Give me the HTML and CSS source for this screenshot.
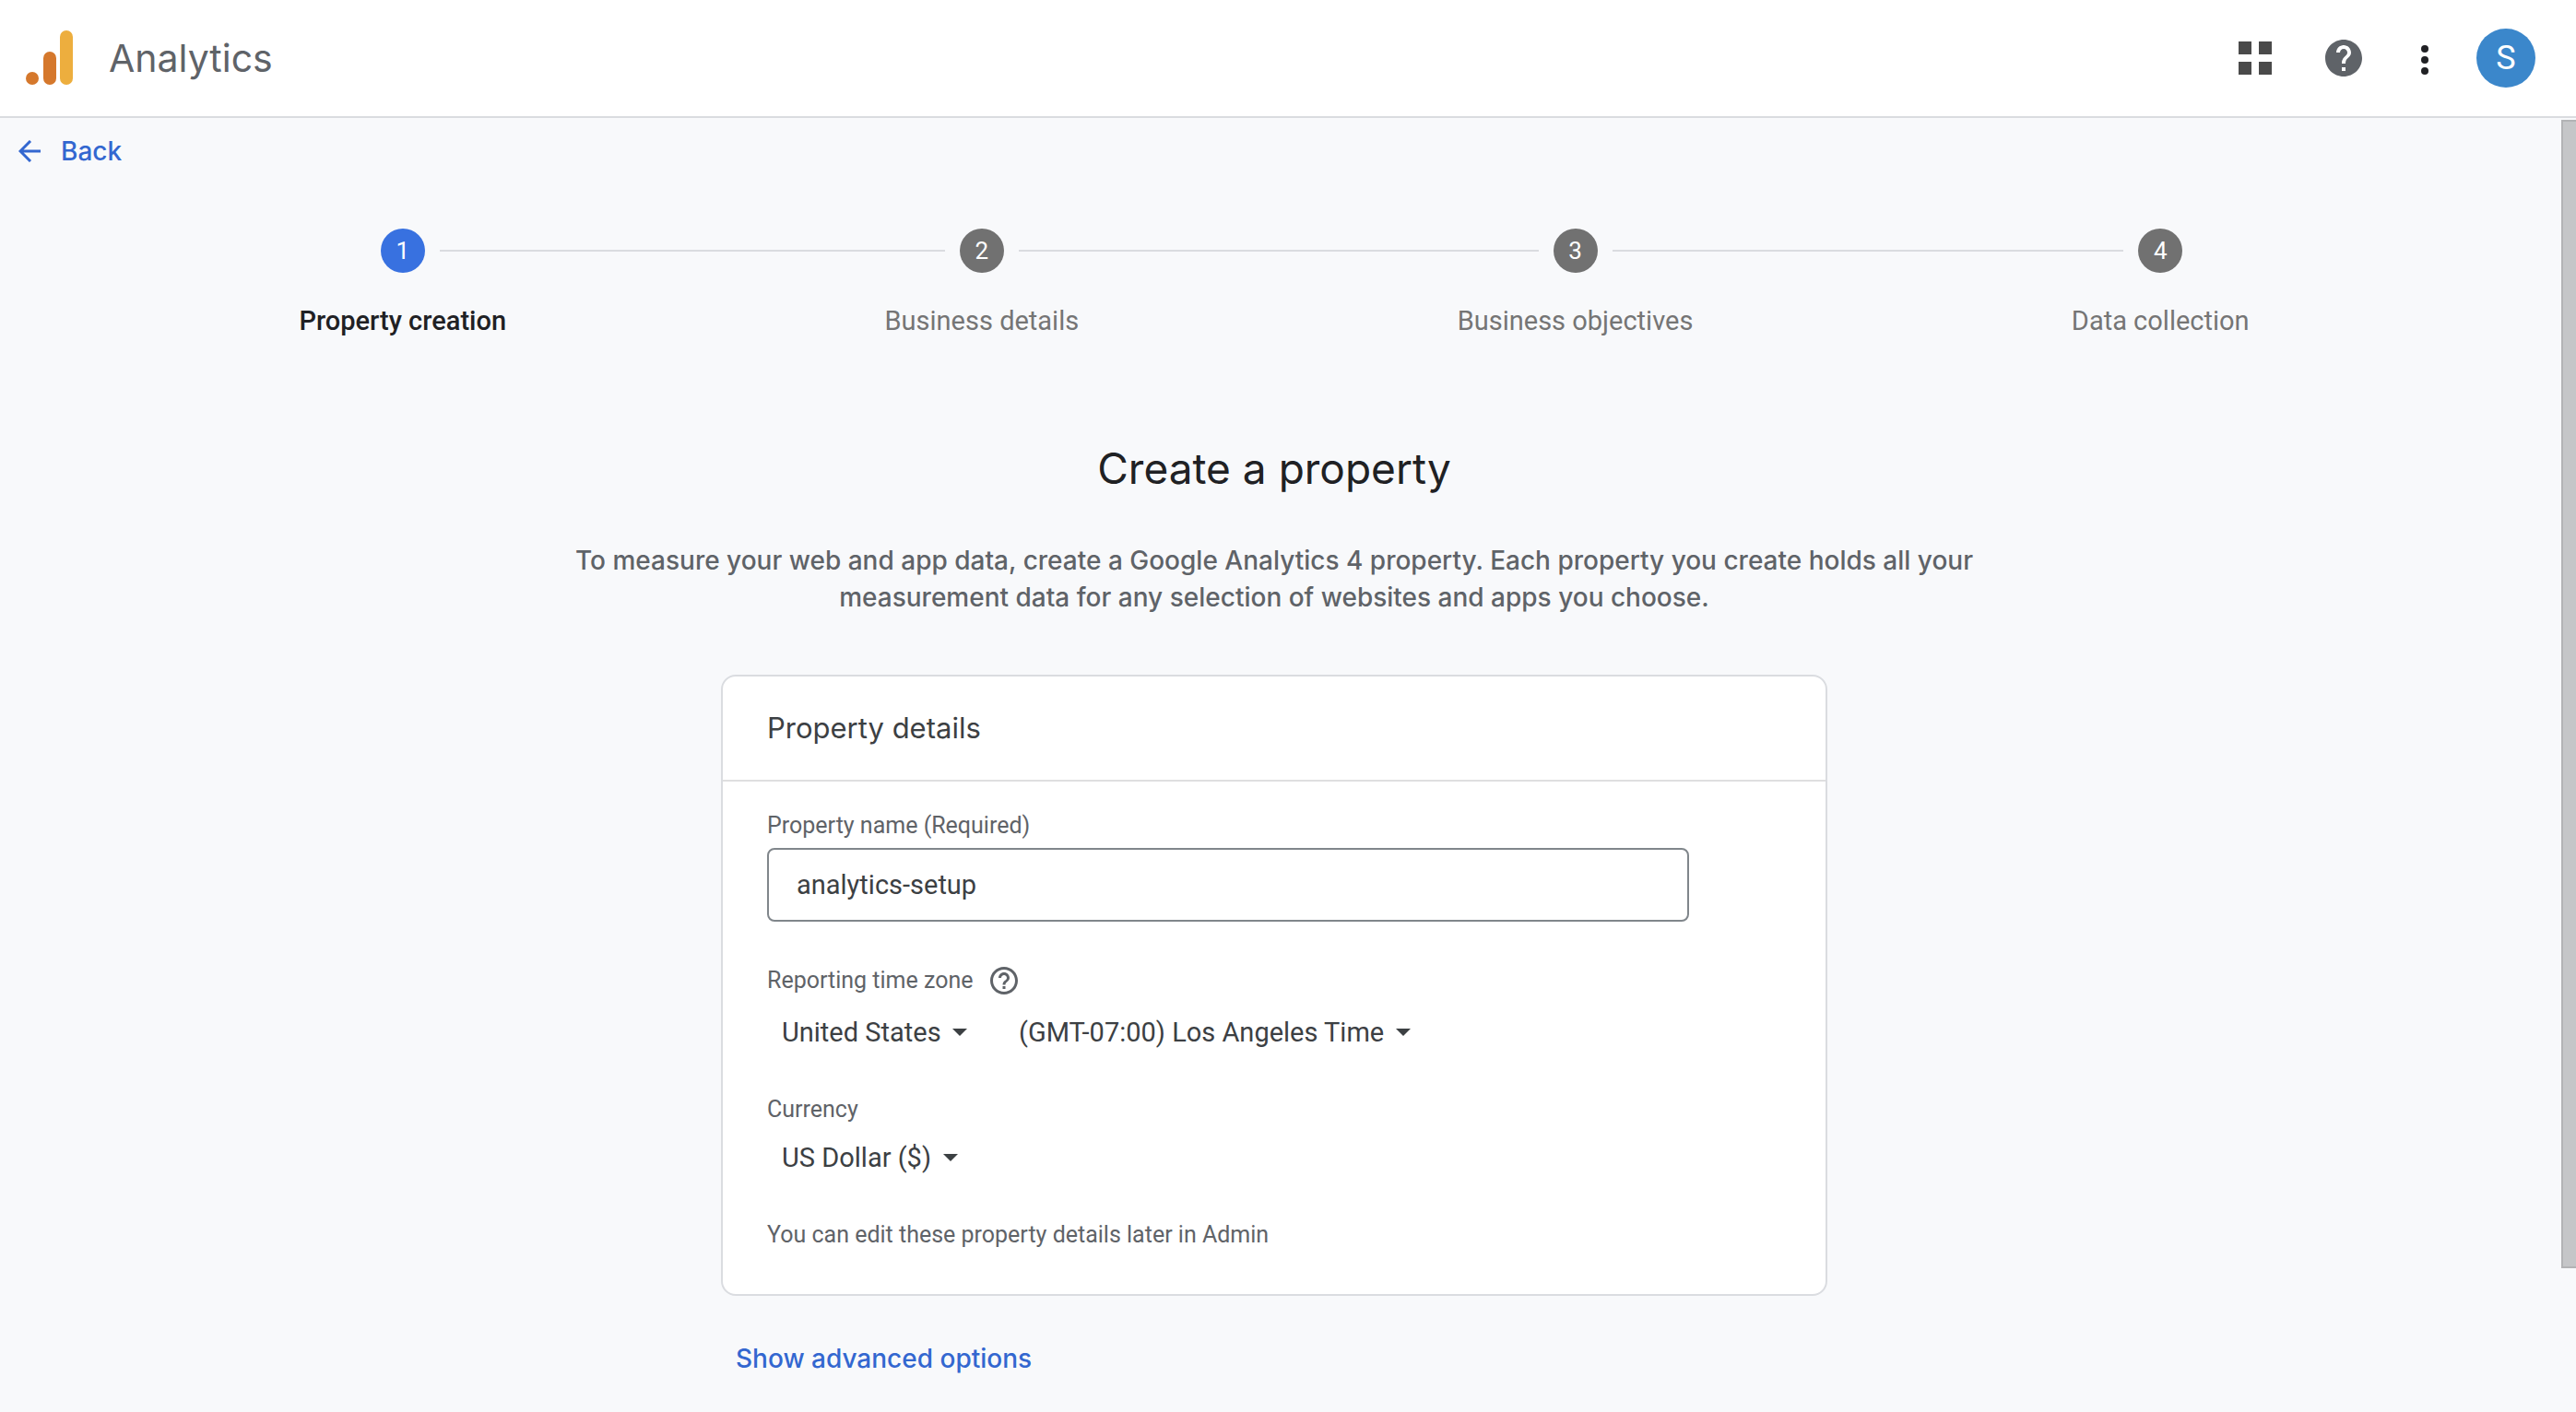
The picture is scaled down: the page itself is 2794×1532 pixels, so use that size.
FILE: index.html
```html
<!DOCTYPE html>
<html lang="en">
<head>
<meta charset="utf-8">
<title>Analytics</title>
<link rel="stylesheet" href="styles.css">
</head>
<body>
<header class="topbar">
  <svg class="logo" viewBox="0 0 52 60" width="52" height="60" aria-hidden="true">
    <circle cx="7" cy="52" r="7" fill="#d5782c"/>
    <rect x="19" y="23" width="14" height="36" rx="7" fill="#d5782c"/>
    <rect x="37" y="0" width="14" height="59" rx="7" fill="#edae3e"/>
  </svg>
  <span class="brand">Analytics</span>
  <button class="icon-button grid-button" type="button" aria-label="Apps">
    <svg viewBox="0 0 36 36" width="36" height="36" fill="#4a4a4a"><path d="M0 0h14v14H0zM22 0h14v14H22zM0 22h14v14H0zM22 22h14v14H22z"/></svg>
  </button>
  <button class="icon-button help-button" type="button" aria-label="Help">
    <svg viewBox="2 2 20 20" width="40" height="40" fill="#5f6368"><path d="M12 2C6.480 2 2 6.480 2 12s4.480 10 10 10 10-4.480 10-10S17.520 2 12 2zm1 17h-2v-2h2v2zm2.070-7.750l-.9.920C13.450 12.900 13 13.500 13 15h-2v-.5c0-1.100.450-2.100 1.170-2.830l1.240-1.260c.370-.360.590-.860.590-1.410 0-1.100-.9-2-2-2s-2 .9-2 2H8c0-2.210 1.790-4 4-4s4 1.790 4 4c0 .880-.360 1.680-.930 2.250z"/></svg>
  </button>
  <button class="icon-button more-button" type="button" aria-label="More">
    <svg viewBox="0 0 8 36" width="8" height="36" fill="#202124"><circle cx="4" cy="8" r="4"/><circle cx="4" cy="20" r="4"/><circle cx="4" cy="32" r="4"/></svg>
  </button>
  <button class="avatar" type="button">S</button>
</header>
<div class="body">
  <main class="content">
    <a class="back" href="#">
      <svg viewBox="0 0 24 24" width="24" height="24" fill="none" stroke="#3367d0" stroke-width="3"><path d="M24 12H2M13 1L2 12l11 11"/></svg>
      Back
    </a>
    <ol class="stepper">
      <li class="step active"><div class="marker"><span class="number">1</span></div>Property creation</li>
      <li class="connector" aria-hidden="true"></li>
      <li class="step"><div class="marker"><span class="number">2</span></div>Business details</li>
      <li class="connector" aria-hidden="true"></li>
      <li class="step"><div class="marker"><span class="number">3</span></div>Business objectives</li>
      <li class="connector" aria-hidden="true"></li>
      <li class="step"><div class="marker"><span class="number">4</span></div>Data collection</li>
    </ol>
    <h1 class="title">Create a property</h1>
    <p class="intro">To measure your web and app data, create a Google Analytics 4 property. Each property you create holds all your measurement data for any selection of websites and apps you choose.</p>
    <form class="form">
      <section class="card">
        <h2 class="card-title">Property details</h2>
        <div class="card-body">
          <div class="field">
            <label class="label" for="name">Property name (Required)</label>
            <input class="text-input" id="name" type="text" value="analytics-setup">
          </div>
          <div class="field zone-field">
            <div class="label-row">
              <label class="label" for="country">Reporting time zone</label>
              <button class="icon-button" type="button" aria-label="About time zones">
                <svg viewBox="2 2 20 20" width="30" height="30" fill="#5f6368"><path d="M11 18h2v-2h-2v2zm1-16C6.480 2 2 6.480 2 12s4.480 10 10 10 10-4.480 10-10S17.520 2 12 2zm0 18c-4.410 0-8-3.590-8-8s3.590-8 8-8 8 3.590 8 8-3.590 8-8 8zm0-14c-2.210 0-4 1.790-4 4h2c0-1.100.9-2 2-2s2 .9 2 2c0 2-3 1.750-3 5h2c0-2.250 3-2.500 3-5 0-2.210-1.790-4-4-4z"/></svg>
              </button>
            </div>
            <div class="select-row">
              <span class="picker">
                <select class="select" id="country"><option>United States</option></select>
                <svg class="caret" viewBox="0 0 16 8" width="16" height="8"><path d="M0 0h16L8 8z"/></svg>
              </span>
              <span class="picker">
                <select class="select" aria-label="Time zone"><option>(GMT-07:00) Los Angeles Time</option></select>
                <svg class="caret" viewBox="0 0 16 8" width="16" height="8"><path d="M0 0h16L8 8z"/></svg>
              </span>
            </div>
          </div>
          <div class="field currency-field">
            <label class="label" for="currency">Currency</label>
            <div class="select-row">
              <span class="picker">
                <select class="select" id="currency"><option>US Dollar ($)</option></select>
                <svg class="caret" viewBox="0 0 16 8" width="16" height="8"><path d="M0 0h16L8 8z"/></svg>
              </span>
            </div>
          </div>
          <p class="note">You can edit these property details later in Admin</p>
        </div>
      </section>
      <button class="advanced" type="button">Show advanced options</button>
    </form>
  </main>
  <div class="scroll-track" aria-hidden="true"><div class="scroll-thumb"></div></div>
</div>
</body>
</html>
```
FILE: styles.css
```css
* { box-sizing: border-box; }

body {
  margin: 0;
  min-height: 100vh;
  display: flex;
  flex-direction: column;
  background: #f8f9fb;
  color: #3c4043;
  font-family: Roboto, sans-serif;
  font-size: 29px;
  line-height: 40px;
}

h1, h2, p, ol { margin: 0; padding: 0; font-weight: 400; }

button, input, select { font: inherit; color: inherit; }

button { padding: 0; border: 0; background: none; cursor: pointer; }

svg { display: block; flex: none; }

.brand, .back, .title, .intro, .card-title, .advanced {
  font-family: "Google Sans", Inter, sans-serif;
  font-size: 28px;
}

.topbar {
  display: flex;
  align-items: center;
  height: 128px;
  padding: 0 44px 0 28px;
  background: #fff;
  border-bottom: 2px solid #dadce0;
}

.topbar .brand {
  flex: 1;
  margin-left: 38px;
  font-size: 41px;
  color: #5f6368;
}

.help-button { margin-left: 58px; }
.more-button { margin-left: 64px; }

.avatar {
  width: 64px;
  height: 64px;
  margin-left: 52px;
  border-radius: 50%;
  background: #3b87cb;
  color: #fff;
  font-size: 36px;
}

.body { flex: 1; display: flex; }

.content { flex: 1; padding: 16px 14px 32px 0; }

.scroll-track { width: 16px; padding: 2px 0; }

.scroll-thumb {
  height: 89%;
  background: #c5c6c8;
  border: 2px solid #b2b3b5;
  border-right: 0;
}

.back {
  display: flex;
  align-items: center;
  gap: 22px;
  width: fit-content;
  padding-left: 20px;
  color: #3367d0;
  font-weight: 500;
  text-decoration: none;
}

.stepper {
  display: flex;
  width: 80%;
  margin: 64px auto 0;
  list-style: none;
}

.step {
  display: flex;
  flex-direction: column;
  gap: 32px;
  padding: 0 48px;
  text-align: center;
  color: #757575;
}

/* The marker row spans the step's side padding so its lines meet the connectors. */
.marker {
  display: flex;
  align-items: center;
  gap: 16px;
  height: 48px;
  margin: 0 -48px;
}

.marker::before, .marker::after {
  content: "";
  flex: 1;
  height: 2px;
  background: #dadce0;
}

.step:first-child .marker::before,
.step:last-child .marker::after { background: none; }

.number {
  width: 48px;
  height: 48px;
  line-height: 48px;
  border-radius: 50%;
  background: #717171;
  color: #fff;
  font-size: 26px;
  font-weight: 400;
}

.active { color: #202124; font-weight: 500; }
.active .number { background: #3871e0; }

.connector {
  flex: 1;
  height: 2px;
  margin-top: 23px;
  background: #dadce0;
}

.title {
  margin-top: 108px;
  font-size: 46px;
  line-height: 64px;
  text-align: center;
  color: #202124;
}

.intro {
  max-width: 1600px;
  margin: 48px auto 0;
  text-align: center;
  color: #5f6368;
  font-weight: 500;
}

.form {
  max-width: 1200px;
  margin: 64px auto 0;
}

.card {
  background: #fff;
  border: 2px solid #dadce0;
  border-radius: 16px;
}

.card-title {
  padding: 36px 48px;
  border-bottom: 2px solid #dfdfe0;
  font-size: 31px;
}

.card-body {
  display: flex;
  flex-direction: column;
  gap: 48px;
  padding: 32px 48px 48px;
}

.field { display: flex; flex-direction: column; align-items: flex-start; gap: 8px; }
.zone-field { gap: 20px; }
.currency-field { gap: 16px; }

.label, .note {
  font-size: 25px;
  line-height: 32px;
  color: #5f6368;
}

.label-row { display: flex; align-items: center; gap: 18px; height: 32px; }

.text-input {
  width: 1000px;
  max-width: 100%;
  height: 80px;
  padding: 0 30px;
  border: 2px solid #80868b;
  border-radius: 8px;
  background: #fff;
}

.select-row { display: flex; gap: 56px; padding-left: 16px; }

.picker { display: grid; align-items: center; }

.select {
  grid-area: 1 / 1;
  height: 40px;
  padding: 0 28px 0 0;
  border: 0;
  background: none;
  appearance: none;
}

.caret {
  grid-area: 1 / 1;
  justify-self: end;
  fill: #3c4043;
  pointer-events: none;
}

.advanced {
  display: block;
  margin: 48px 0 0 16px;
  color: #3367d0;
  font-weight: 500;
}
```
